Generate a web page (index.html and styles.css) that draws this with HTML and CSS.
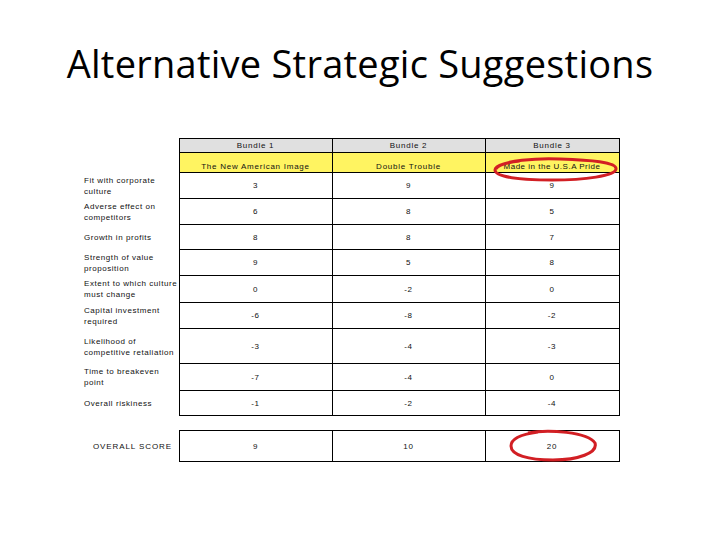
FILE: index.html
```html
<!DOCTYPE html>
<html>
<head>
<meta charset="utf-8">
<link rel="stylesheet" href="styles.css">
</head>
<body>
<div class="slide">
  <h1 class="title">Alternative Strategic Suggestions</h1>
  <table class="grid">
    <colgroup>
      <col class="c-label"><col class="c-b1"><col class="c-b2"><col class="c-b3">
    </colgroup>
    <tr class="h1">
      <td class="lbl"></td><td class="cell gray">Bundle 1</td><td class="cell gray">Bundle 2</td><td class="cell gray">Bundle 3</td>
    </tr>
    <tr class="h2">
      <td class="lbl"></td><td class="cell yellow">The New American Image</td><td class="cell yellow">Double Trouble</td>
      <td class="cell yellow mark tight">Made in the U.S.A Pride
        <svg class="ring ring-top" viewBox="0 0 130 25" width="130" height="25"><path d="M6 12 C 10 3, 50 1, 70 2 C 100 3, 127 5, 126 12 C 125 19, 95 23, 62 23 C 30 23, 5 20, 5 13 C 5 8, 20 5, 30 4" fill="none" stroke="#d21f24" stroke-width="3"/></svg>
      </td>
    </tr>
    <tr class="r"><td class="lbl">Fit with corporate<br>culture</td><td class="cell">3</td><td class="cell">9</td><td class="cell">9</td></tr>
    <tr class="r"><td class="lbl">Adverse effect on<br>competitors</td><td class="cell">6</td><td class="cell">8</td><td class="cell">5</td></tr>
    <tr class="r r3"><td class="lbl">Growth in profits</td><td class="cell">8</td><td class="cell">8</td><td class="cell">7</td></tr>
    <tr class="r"><td class="lbl">Strength of value<br>proposition</td><td class="cell">9</td><td class="cell">5</td><td class="cell">8</td></tr>
    <tr class="r r5"><td class="lbl">Extent to which culture<br>must change</td><td class="cell">0</td><td class="cell">-2</td><td class="cell">0</td></tr>
    <tr class="r"><td class="lbl">Capital investment<br>required</td><td class="cell">-6</td><td class="cell">-8</td><td class="cell">-2</td></tr>
    <tr class="r r7"><td class="lbl low">Likelihood of<br>competitive retaliation</td><td class="cell">-3</td><td class="cell">-4</td><td class="cell">-3</td></tr>
    <tr class="r r8"><td class="lbl">Time to breakeven<br>point</td><td class="cell">-7</td><td class="cell">-4</td><td class="cell">0</td></tr>
    <tr class="r r9"><td class="lbl">Overall riskiness</td><td class="cell">-1</td><td class="cell">-2</td><td class="cell">-4</td></tr>
    <tr class="gap"><td></td><td></td><td></td><td></td></tr>
    <tr class="score"><td class="lbl total">OVERALL SCORE</td><td class="cell">9</td><td class="cell">10</td>
      <td class="cell mark">20
        <svg class="ring ring-score" viewBox="0 0 90 33" width="90" height="33"><path d="M20 4 C 40 0, 80 3, 87 14 C 90 24, 70 31, 45 31 C 20 31, 3 26, 3 17 C 3 9, 15 5, 30 3" fill="none" stroke="#d21f24" stroke-width="3"/></svg>
      </td>
    </tr>
  </table>
</div>
</body>
</html>
```
FILE: styles.css
```css
html, body {
  margin: 0;
  padding: 0;
  background: #ffffff;
}
.slide {
  width: 720px;
  height: 540px;
  position: relative;
  overflow: hidden;
}
.title {
  margin: 0;
  padding-top: 39px;
  height: 138px;
  box-sizing: border-box;
  text-align: center;
  font-family: "Open Sans", "Liberation Sans", sans-serif;
  font-weight: 400;
  font-size: 38px;
  line-height: 48px;
  letter-spacing: 0.25px;
  color: #000;
}
.grid {
  margin-left: 84px;
  border-collapse: collapse;
  table-layout: fixed;
  width: 535px;
  font-family: "Liberation Sans", Arial, sans-serif;
  font-size: 8px;
  letter-spacing: 0.75px;
  color: #111;
}
.c-label { width: 95px; }
.c-b1 { width: 153px; }
.c-b2 { width: 153px; }
.c-b3 { width: 134px; }
.grid td {
  padding: 0;
  box-sizing: border-box;
}
.cell {
  border: 1px solid #000;
  text-align: center;
  vertical-align: middle;
}
.gray {
  background: #e0e0e0;
}
.yellow {
  background: #fff461;
  vertical-align: bottom;
  padding-bottom: 1px !important;
}
.tight { letter-spacing: 0.5px; }
.lbl {
  text-align: left;
  vertical-align: middle;
  line-height: 11px;
  white-space: nowrap;
  letter-spacing: 0.55px;
}
.lbl.low { padding-top: 2px !important; }
.total { padding-left: 9px !important; letter-spacing: 0.9px; }
.h1 { height: 14px; }
.h2 { height: 20px; }
.r { height: 26px; }
.r3 { height: 25px; }
.r5 { height: 27px; }
.r7 { height: 35px; }
.r8 { height: 27px; }
.r9 { height: 25px; }
.gap { height: 15px; }
.score { height: 31px; }
.mark { position: relative; }
.ring {
  position: absolute;
  display: block;
}
.ring-top { left: 4px; top: 4px; }
.ring-score { left: 22px; top: -2px; }
```
